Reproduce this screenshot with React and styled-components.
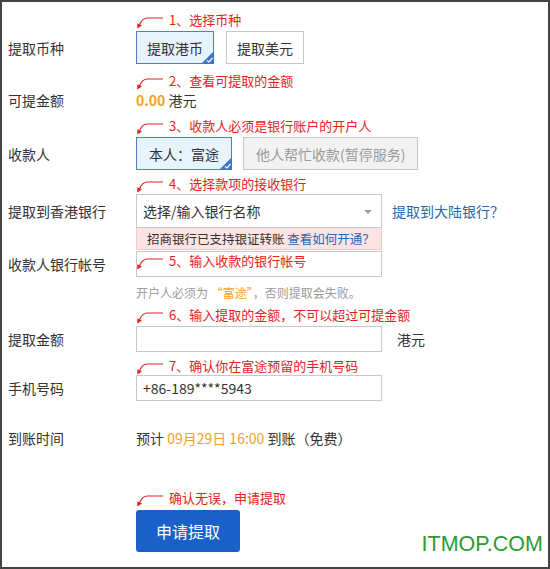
import React from "react";
import styled, { createGlobalStyle } from "styled-components";

const GlobalStyle = createGlobalStyle`
  html, body { margin: 0; padding: 0; background: #fff; }
  body { font-family: "Noto Sans CJK SC", "Noto Sans", sans-serif; }
`;

const Frame = styled.div`
  position: relative;
  width: 550px;
  height: 569px;
  box-sizing: border-box;
  border: 2px solid #444;
  padding: 29px 0 0 6px;
  background: #fff;
  color: #333;
`;

const Row = styled.div`
  display: flex;
  align-items: center;
  height: ${(p) => p.$h || 26}px;
  margin-top: ${(p) => p.$mt || 0}px;
`;

const Label = styled.div`
  width: 128px;
  flex: none;
  font-size: 14px;
  line-height: 20px;
  color: #333;
`;

const Control = styled.div`
  position: relative;
  display: flex;
  align-items: center;
  height: 100%;
  gap: ${(p) => p.$gap || 0}px;
`;

const Choice = styled.div`
  position: relative;
  box-sizing: border-box;
  height: 33px;
  padding: 0 ${(p) => p.$pad || 10}px;
  display: flex;
  align-items: center;
  font-size: 14px;
  color: ${(p) => (p.$disabled ? "#9a9a9a" : "#333")};
  background: ${(p) => (p.$active ? "#e8f4fd" : p.$disabled ? "#f2f2f2" : "#fff")};
  border: 1px solid ${(p) => (p.$active ? "#4f80c6" : "#c6c6c6")};
`;

const Corner = styled.svg`
  position: absolute;
  right: -1px;
  bottom: -1px;
`;

const Amount = styled.span`
  font-size: 14px;
  line-height: 20px;
  color: #333;
`;

const Orange = styled.span`
  color: #f4a12a;
  font-weight: ${(p) => (p.$bold ? 700 : 400)};
`;

const Field = styled.div`
  position: relative;
  box-sizing: border-box;
  width: 246px;
  height: 100%;
  border: 1px solid #c8c8c8;
  background: #fff;
  display: flex;
  align-items: center;
  padding: 0 6px;
  font-size: 14px;
  color: #333;
`;

const Caret = styled.span`
  position: absolute;
  right: 9px;
  top: 15px;
  width: 0;
  height: 0;
  border-left: 4px solid transparent;
  border-right: 4px solid transparent;
  border-top: 4px solid #a0a0a0;
`;

const Link = styled.a`
  color: #2469b4;
  text-decoration: none;
  font-size: ${(p) => p.$size || 14}px;
`;

const Notice = styled.div`
  box-sizing: border-box;
  width: 246px;
  height: 22px;
  margin-left: 128px;
  padding-left: 10px;
  display: flex;
  align-items: center;
  background: #fde4e4;
  border: 1px solid #f6c8c8;
  border-top: none;
  font-size: 12.5px;
  color: #333;
`;

const Hint = styled.div`
  margin: 7px 0 0 128px;
  font-size: 12px;
  line-height: 18px;
  color: #9a9a9a;
`;

const Unit = styled.span`
  font-size: 14px;
  color: #333;
`;

const Submit = styled.button`
  margin-left: 128px;
  width: 104px;
  height: 42px;
  border: none;
  border-radius: 3px;
  background: #1b5fc8;
  color: #fff;
  font-family: inherit;
  font-size: 16px;
  cursor: pointer;
`;

const SubmitWrap = styled.div`
  position: relative;
  margin-top: 62px;
  width: 232px;
`;

const Note = styled.div`
  position: absolute;
  left: ${(p) => p.$left || 0}px;
  top: ${(p) => (p.$top !== undefined ? p.$top : -19)}px;
  display: flex;
  align-items: flex-start;
  height: 18px;
  white-space: nowrap;
  pointer-events: none;
`;

const NoteText = styled.span`
  margin-left: 3px;
  font-size: 13px;
  line-height: 16px;
  color: #e3221c;
`;

const ArrowSvg = styled.svg`
  margin-top: 4px;
  flex: none;
`;

const Watermark = styled.div`
  position: absolute;
  right: 5px;
  bottom: 12px;
  font-family: "Liberation Sans", Arial, sans-serif;
  font-size: 21.5px;
  line-height: 22px;
  color: #2f9a2f;
`;

const Arrow = () => (
  <ArrowSvg width="30" height="13" viewBox="0 0 30 13">
    <path d="M27 2 H11 Q6 2.5 3.6 8.8" stroke="#e3221c" strokeWidth="1.2" fill="none" />
    <polygon points="1.2,12.6 1.4,7.2 6,9.6" fill="#e3221c" />
  </ArrowSvg>
);

const Annotation = ({ children, top, left }) => (
  <Note $top={top} $left={left}>
    <Arrow />
    <NoteText>{children}</NoteText>
  </Note>
);

const Check = () => (
  <Corner width="13" height="13" viewBox="0 0 13 13">
    <polygon points="13,0 13,13 0,13" fill="#3f76c4" />
    <path d="M6 9.5 L8 11 L11.5 7" stroke="#fff" strokeWidth="1.2" fill="none" />
  </Corner>
);

export default function App() {
  return (
    <>
      <GlobalStyle />
      <Frame>
        <Row $h={33}>
          <Label>提取币种</Label>
          <Control $gap={12}>
            <Annotation>1、选择币种</Annotation>
            <Choice $active>
              提取港币
              <Check />
            </Choice>
            <Choice>提取美元</Choice>
          </Control>
        </Row>

        <Row $h={22} $mt={25}>
          <Label>可提金额</Label>
          <Control>
            <Annotation top={-16}>2、查看可提取的金额</Annotation>
            <Amount>
              <Orange $bold>0.00</Orange> 港元
            </Amount>
          </Control>
        </Row>

        <Row $h={33} $mt={26}>
          <Label>收款人</Label>
          <Control $gap={11}>
            <Annotation>3、收款人必须是银行账户的开户人</Annotation>
            <Choice $active $pad={12}>
              本人：富途
              <Check />
            </Choice>
            <Choice $disabled $pad={12}>他人帮忙收款(暂停服务)</Choice>
          </Control>
        </Row>

        <Row $h={34} $mt={24}>
          <Label>提取到香港银行</Label>
          <Control $gap={10}>
            <Annotation top={-18}>4、选择款项的接收银行</Annotation>
            <Field>
              选择/输入银行名称
              <Caret />
            </Field>
            <Link href="#">提取到大陆银行？</Link>
          </Control>
        </Row>
        <Notice>
          招商银行已支持银证转账&nbsp;<Link href="#" $size={12.5}>查看如何开通？</Link>
        </Notice>

        <Row $h={26} $mt={1}>
          <Label>收款人银行帐号</Label>
          <Control>
            <Field />
            <Annotation top={2}>5、输入收款的银行帐号</Annotation>
          </Control>
        </Row>
        <Hint>
          开户人必须为 <Orange>“富途”</Orange>，否则提取会失败。
        </Hint>

        <Row $h={26} $mt={24}>
          <Label>提取金额</Label>
          <Control $gap={15}>
            <Annotation>6、输入提取的金额，不可以超过可提金额</Annotation>
            <Field />
            <Unit>港元</Unit>
          </Control>
        </Row>

        <Row $h={26} $mt={23}>
          <Label>手机号码</Label>
          <Control>
            <Annotation top={-17}>7、确认你在富途预留的手机号码</Annotation>
            <Field>+86-189****5943</Field>
          </Control>
        </Row>

        <Row $h={20} $mt={27}>
          <Label>到账时间</Label>
          <Amount>
            预计 <Orange>09月29日 16:00</Orange> 到账（免费）
          </Amount>
        </Row>

        <SubmitWrap>
          <Annotation left={128} top={-20}>确认无误，申请提取</Annotation>
          <Submit>申请提取</Submit>
        </SubmitWrap>

        <Watermark>ITMOP.COM</Watermark>
      </Frame>
    </>
  );
}
